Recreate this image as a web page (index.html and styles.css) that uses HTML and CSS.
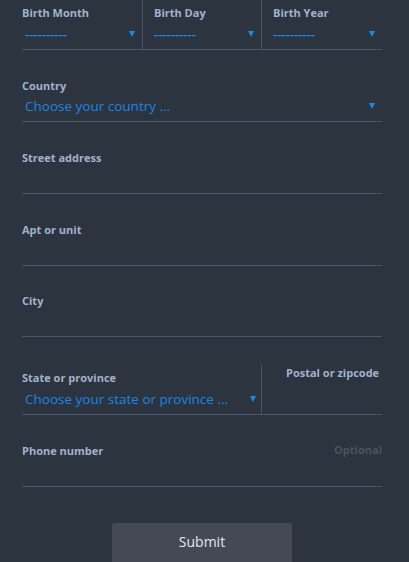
FILE: index.html
```html
<!DOCTYPE html>
<html>
<head>
<meta charset="utf-8">
<link rel="stylesheet" href="styles.css">
</head>
<body>
<form class="form">
  <div class="birth-row">
    <div class="birth-cell">
      <div class="label">Birth Month</div>
      <div class="dash-select"><span class="dashes">----------</span><span class="caret"></span></div>
    </div>
    <div class="birth-cell sep">
      <div class="label">Birth Day</div>
      <div class="dash-select"><span class="dashes">----------</span><span class="caret"></span></div>
    </div>
    <div class="birth-cell sep">
      <div class="label">Birth Year</div>
      <div class="dash-select"><span class="dashes">----------</span><span class="caret"></span></div>
    </div>
  </div>

  <div class="field country">
    <div class="label">Country</div>
    <div class="select"><span>Choose your country ...</span><span class="caret"></span></div>
  </div>

  <div class="field">
    <div class="label">Street address</div>
    <div class="input"></div>
  </div>

  <div class="field">
    <div class="label">Apt or unit</div>
    <div class="input"></div>
  </div>

  <div class="field city">
    <div class="label">City</div>
    <div class="input"></div>
  </div>

  <div class="split-row">
    <div class="state">
      <div class="label">State or province</div>
      <div class="select"><span>Choose your state or province ...</span><span class="caret"></span></div>
    </div>
    <div class="postal">
      <div class="label">Postal or zipcode</div>
    </div>
  </div>

  <div class="field phone">
    <div class="label-row"><span class="label">Phone number</span><span class="optional">Optional</span></div>
    <div class="input"></div>
  </div>

  <div class="actions">
    <button type="button" class="submit">Submit</button>
  </div>
</form>
</body>
</html>
```

FILE: styles.css
```css
html, body {
  margin: 0;
  padding: 0;
  background: #2c3440;
  height: 100%;
  overflow: hidden;
}
body {
  font-family: "Open Sans", "Noto Sans", sans-serif;
}
.form {
  width: 360px;
  padding-left: 22px;
}
.label {
  font-size: 11px;
  font-weight: 700;
  line-height: 15px;
  color: #a3b2ca;
}
.caret {
  width: 0;
  height: 0;
  border-left: 3.5px solid transparent;
  border-right: 3.5px solid transparent;
  border-top: 6px solid #1a8ae6;
  flex: none;
}
.birth-row {
  display: grid;
  grid-template-columns: 120px 119px 121px;
  border-bottom: 1px solid #4c5562;
  height: 49px;
}
.birth-cell {
  padding-top: 5px;
  padding-right: 7px;
  display: flex;
  flex-direction: column;
}
.birth-cell.sep {
  border-left: 1px solid #4c5562;
  padding-left: 11px;
}
.dash-select {
  display: flex;
  align-items: center;
  justify-content: space-between;
  margin-top: 6px;
  padding-left: 3px;
  height: 16px;
}
.birth-cell.sep .dash-select {
  padding-left: 0;
}
.dashes {
  color: #1e8ef0;
  font-size: 13px;
  font-weight: 600;
  line-height: 16px;
  letter-spacing: 0;
}
.field {
  border-bottom: 1px solid #4c5562;
  padding-top: 28px;
}
.select {
  display: flex;
  align-items: center;
  justify-content: space-between;
  height: 27px;
  padding: 0 7px 0 3px;
  color: #1a86e0;
  font-size: 13.5px;
  box-sizing: border-box;
}
.country .select {
  height: 28px;
  padding-bottom: 3px;
}
.input {
  height: 28px;
}
.city {
  padding-top: 27px;
}
.split-row {
  display: grid;
  grid-template-columns: 239px 121px;
  border-bottom: 1px solid #4c5562;
  margin-top: 28px;
}
.state {
  padding-top: 5px;
}
.state .select {
  height: 29px;
  padding-right: 5px;
  padding-bottom: 2px;
}
.postal {
  border-left: 1px solid #4c5562;
  padding-left: 24px;
}
.label-row {
  display: flex;
  justify-content: space-between;
  align-items: baseline;
}
.optional {
  font-size: 11px;
  font-weight: 700;
  color: #4b535e;
  line-height: 15px;
  position: relative;
  top: -1px;
}
.actions {
  display: flex;
  justify-content: center;
  padding-top: 36px;
  width: 360px;
}
.submit {
  width: 180px;
  height: 44px;
  background: #434a55;
  border: none;
  border-radius: 3px;
  color: #e3e8ef;
  font-family: "Open Sans", "Noto Sans", sans-serif;
  font-size: 14px;
  padding: 0 0 8px;
}
```
